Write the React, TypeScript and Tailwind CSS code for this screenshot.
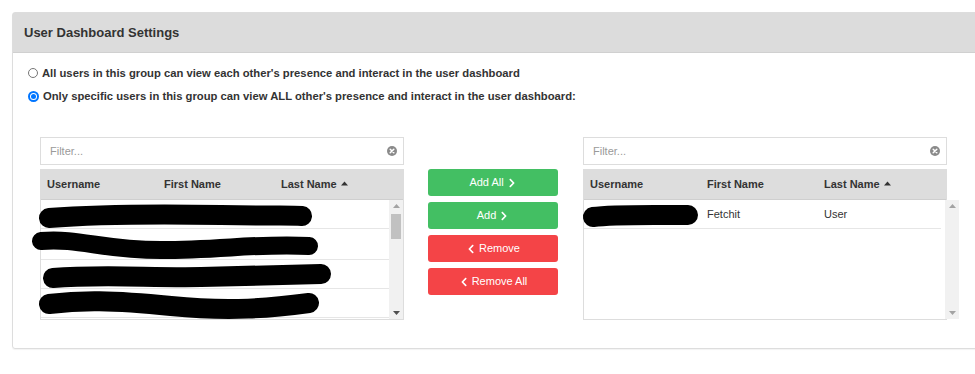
import React from "react";
import { FaChevronRight, FaChevronLeft } from "react-icons/fa";

const font = { fontFamily: '"Liberation Sans", Arial, sans-serif' };

function ClearIcon() {
  return (
    <svg width="10" height="10" viewBox="0 0 10 10" className="shrink-0">
      <circle cx="5" cy="5" r="5" fill="#8a8a8a" />
      <path d="M3.2 3.2 L6.8 6.8 M6.8 3.2 L3.2 6.8" stroke="#fff" strokeWidth="1.5" strokeLinecap="round" />
    </svg>
  );
}

function SortUp() {
  return (
    <svg width="7" height="5" viewBox="0 0 7 5" className="inline-block ml-[4px] mb-[3px]">
      <path d="M0 4.5 L3.5 0.5 L7 4.5 Z" fill="#333" />
    </svg>
  );
}

function Scrollbar({ thumb }: { thumb: boolean }) {
  return (
    <div className="w-[14px] bg-[#f1f1f1] flex flex-col items-center justify-between py-[4px] relative shrink-0">
      <svg width="7" height="4" viewBox="0 0 7 4"><path d="M0 4 L3.5 0 L7 4 Z" fill="#a3a3a3" /></svg>
      {thumb && <div className="absolute left-[2px] top-[14px] w-[10px] h-[25px] bg-[#c1c1c1]" />}
      <svg width="7" height="4" viewBox="0 0 7 4"><path d="M0 0 L3.5 4 L7 0 Z" fill={thumb ? "#505050" : "#a3a3a3"} /></svg>
    </div>
  );
}

function Header() {
  return (
    <div className="h-[30px] bg-[#dddddd] flex items-center text-[11px] font-bold text-[#333] border-b border-[#cfcfcf]">
      <div className="w-[123px] pl-[6px]">Username</div>
      <div className="w-[117px]">First Name</div>
      <div className="w-[117px]">Last Name<SortUp /></div>
    </div>
  );
}

function Filter() {
  return (
    <div className="h-[28px] border border-[#dddddd] flex items-center pl-[9px] pr-[6px] bg-white">
      <span className="flex-1 text-[11px] text-[#9a9a9a]">Filter...</span>
      <ClearIcon />
    </div>
  );
}

function LeftList() {
  const rows = [29, 31, 29, 29];
  return (
    <div className="w-[364px] flex flex-col gap-[4px]">
      <Filter />
      <div className="border border-[#dddddd]">
        <Header />
        <div className="h-[119px] flex relative">
          <div className="flex-1 flex flex-col overflow-hidden">
            {rows.map((h, i) => (
              <div key={i} className="border-b border-[#e6e6e6] shrink-0" style={{ height: h }} />
            ))}
          </div>
          <Scrollbar thumb />
          <svg className="absolute left-0 top-0 overflow-visible pointer-events-none" width="350" height="119">
            <path d="M8 18 C 60 14, 120 14, 180 15 S 250 15, 261 16" stroke="#000" strokeWidth="20" strokeLinecap="round" fill="none" />
            <path d="M0 41 C 40 38, 60 50, 120 50 S 220 43, 268 46" stroke="#000" strokeWidth="18" strokeLinecap="round" fill="none" />
            <path d="M12 78 C 60 74, 110 78, 160 77 S 250 75, 280 74" stroke="#000" strokeWidth="20" strokeLinecap="round" fill="none" />
            <path d="M8 104 C 40 100, 70 100, 130 106 S 230 108, 268 103" stroke="#000" strokeWidth="20" strokeLinecap="round" fill="none" />
          </svg>
        </div>
      </div>
    </div>
  );
}

function RightList() {
  return (
    <div className="w-[364px] flex flex-col gap-[4px]">
      <Filter />
      <div className="border border-[#dddddd]">
        <Header />
        <div className="h-[119px] flex relative">
          <div className="flex-1 flex flex-col pr-[4px]">
            <div className="h-[29px] border-b border-[#e6e6e6] flex items-center text-[11px] text-[#333]">
              <div className="w-[123px] pl-[6px]" />
              <div className="w-[117px]">Fetchit</div>
              <div className="w-[117px]">User</div>
            </div>
          </div>
          <Scrollbar thumb={false} />
          <svg className="absolute left-0 top-0 overflow-visible pointer-events-none" width="120" height="40">
            <path d="M9 17 C 30 14, 70 15, 104 15" stroke="#000" strokeWidth="20" strokeLinecap="round" fill="none" />
          </svg>
        </div>
      </div>
    </div>
  );
}

export default function App() {
  return (
    <div className="w-[975px] h-[374px] bg-white overflow-hidden pt-[12px] pl-[12px]" style={font}>
      <div className="w-[980px] border border-[#dddddd] rounded-[3px] shadow-[0_1px_1px_rgba(0,0,0,0.05)]">
        <div className="h-[40px] bg-[#dcdcdc] flex items-center pl-[11px] text-[13px] font-bold text-[#333] border-b border-[#d0d0d0]">
          User Dashboard Settings
        </div>
        <div className="pt-[12px] pl-[15px] pb-[28px]">
          <label className="flex items-center gap-[4px] text-[11.25px] font-bold text-[#333] h-[16px]">
            <span className="w-[10px] h-[10px] rounded-full border border-[#767676] bg-white shrink-0" />
            All users in this group can view each other's presence and interact in the user dashboard
          </label>
          <label className="flex items-center gap-[4px] text-[11.25px] font-bold text-[#333] h-[16px] mt-[7px]">
            <span className="w-[11px] h-[11px] rounded-full border-2 border-[#0075ff] bg-white flex items-center justify-center shrink-0">
              <span className="w-[5px] h-[5px] rounded-full bg-[#0075ff]" />
            </span>
            Only specific users in this group can view ALL other's presence and interact in the user dashboard:
          </label>
          <div className="flex items-start mt-[33px] pl-[12px]">
            <LeftList />
            <div className="ml-[24px] mt-[32px] w-[130px] flex flex-col gap-[6px] text-[11px] text-white">
              <button className="h-[27px] bg-[#43bf63] rounded-[3px] flex items-center justify-center gap-[3px]">
                Add All <FaChevronRight size={10} />
              </button>
              <button className="h-[27px] bg-[#43bf63] rounded-[3px] flex items-center justify-center gap-[3px]">
                Add <FaChevronRight size={10} />
              </button>
              <button className="h-[27px] bg-[#f44447] rounded-[3px] flex items-center justify-center gap-[3px]">
                <FaChevronLeft size={10} /> Remove
              </button>
              <button className="h-[27px] bg-[#f44447] rounded-[3px] flex items-center justify-center gap-[3px]">
                <FaChevronLeft size={10} /> Remove All
              </button>
            </div>
            <div className="ml-[25px]">
              <RightList />
            </div>
          </div>
        </div>
      </div>
    </div>
  );
}
